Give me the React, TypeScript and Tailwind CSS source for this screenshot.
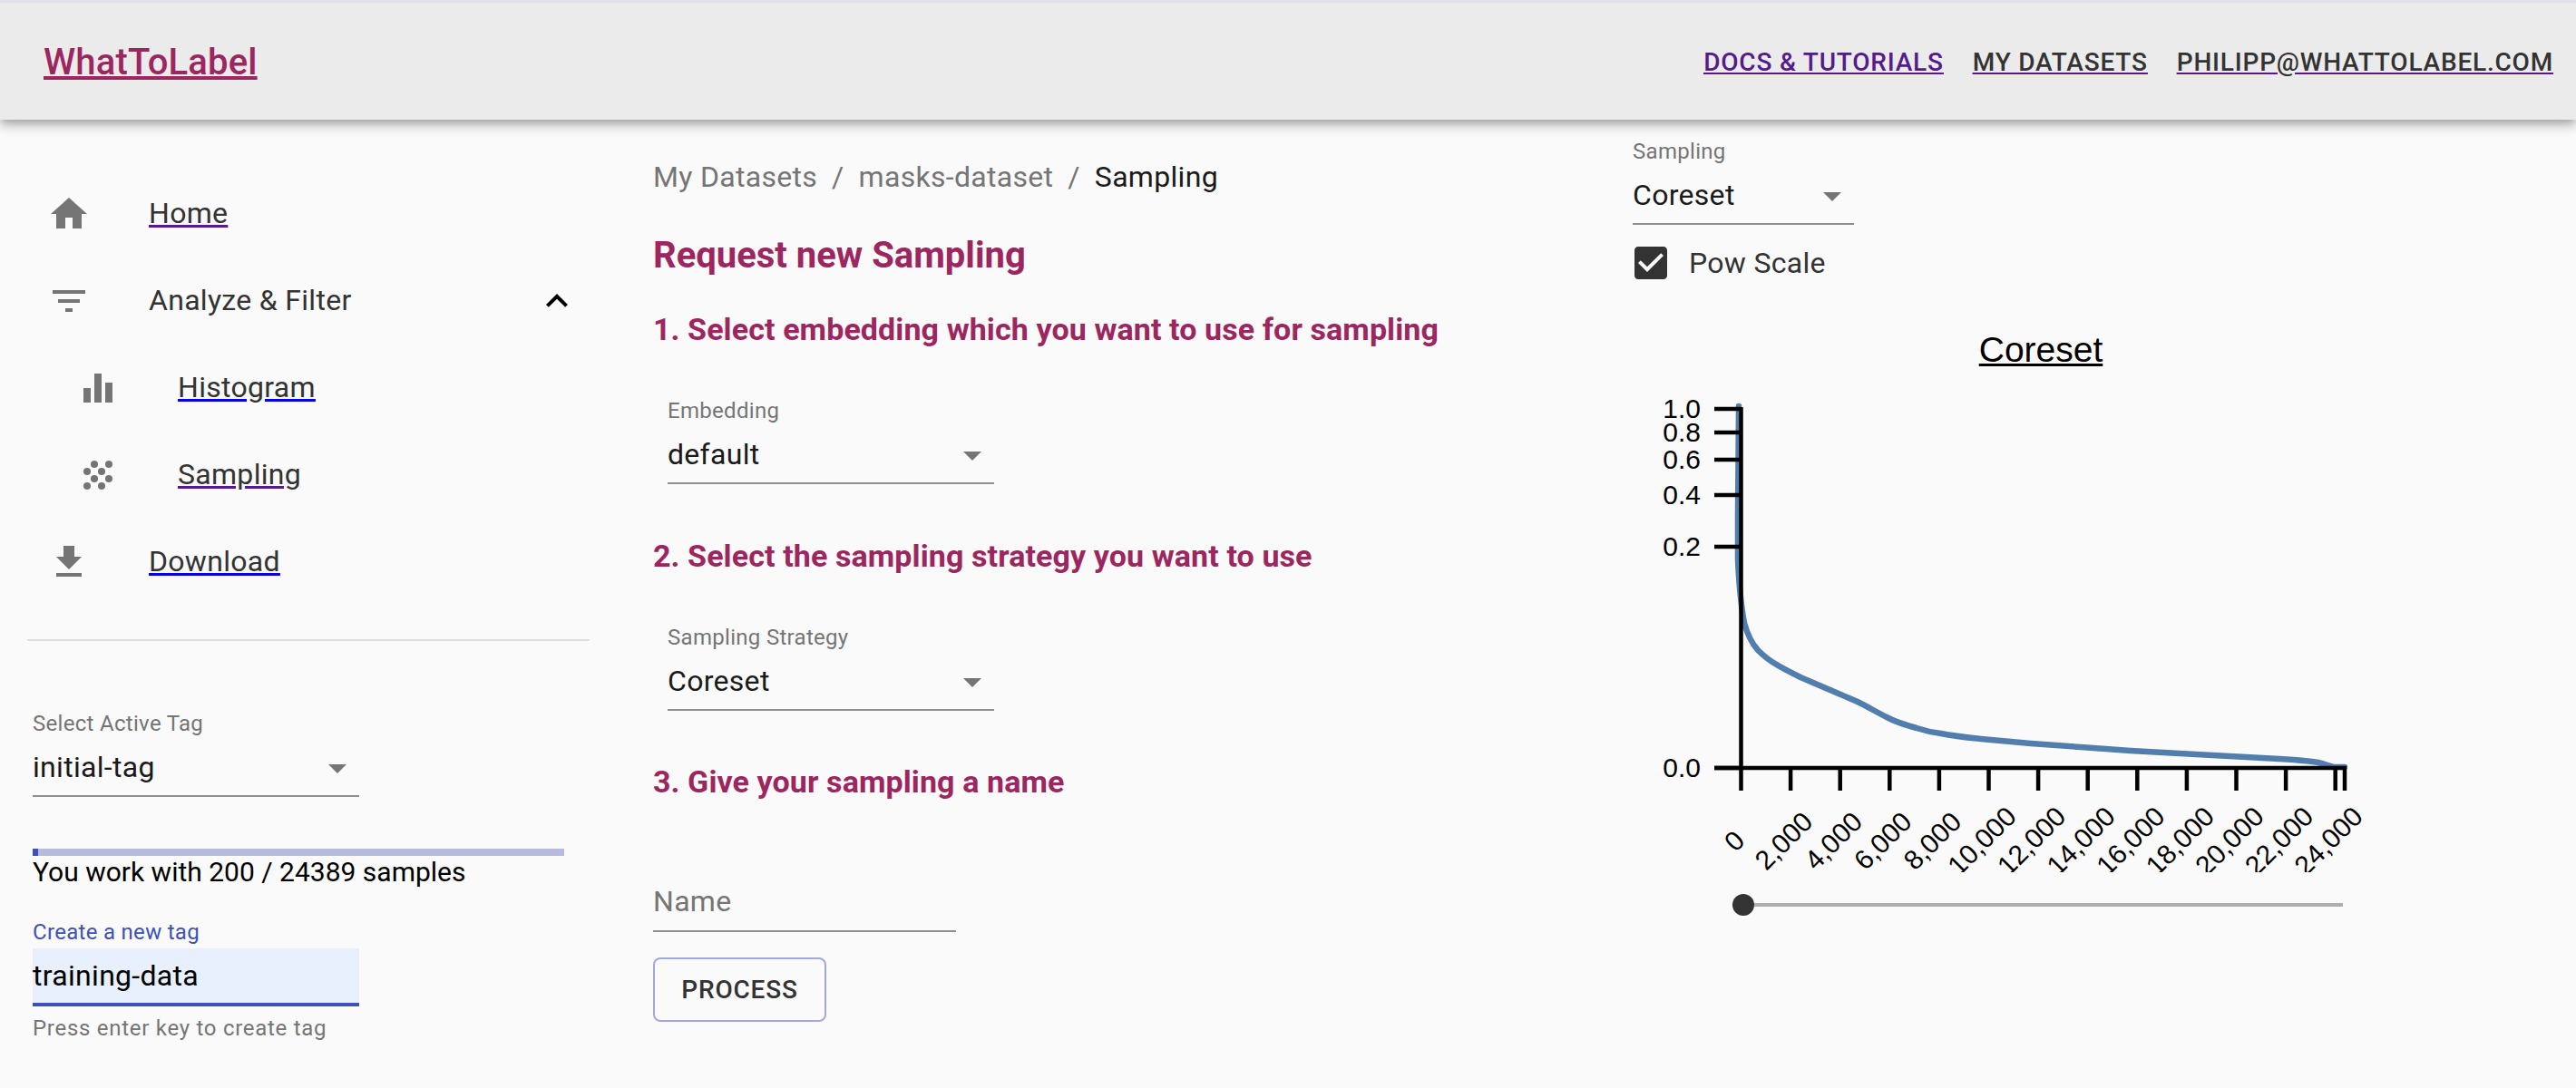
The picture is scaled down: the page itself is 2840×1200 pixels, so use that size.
import React from 'react';

const yTicks = [
  { label: '1.0', y: 451 },
  { label: '0.8', y: 477 },
  { label: '0.6', y: 507 },
  { label: '0.4', y: 546 },
  { label: '0.2', y: 603 },
  { label: '0.0', y: 847 },
];

const xLabels = ['0', '2,000', '4,000', '6,000', '8,000', '10,000', '12,000', '14,000', '16,000', '18,000', '20,000', '22,000', '24,000'];

const curve =
  'M1917 448 L1916 567 L1916 617 C1917 640 1918 660 1923 687 C1926 698 1930 708 1938 717 C1945 724 1950 728 1957 732 C1965 737 1973 741 1985 747 L2027 765 C2036 769 2044 772 2050 775 C2060 780 2070 786 2082 792 C2092 797 2102 800 2113 803 C2122 806 2132 808 2140 809 C2155 812 2165 813 2184 815 L2239 820 L2294 824 L2349 828 L2403 831 L2458 834 L2513 837 C2530 838 2545 839 2556 841 C2564 843 2568 845 2573 846 L2585 846';

function Icon({ d, className = 'text-[#757575]' }: { d: string; className?: string }) {
  return (
    <svg viewBox="0 0 24 24" className={`w-12 h-12 shrink-0 ${className}`} fill="currentColor">
      <path d={d} />
    </svg>
  );
}

function Select({ label, value, width = 'w-[360px]' }: { label: string; value: string; width?: string }) {
  return (
    <div className={width}>
      <div className="text-[24px] leading-[28px] tracking-[0.3px] text-[#757575]">{label}</div>
      <div className="relative mt-[11px] pb-[8px] border-b-2 border-[#8e8e8e] text-[32px] leading-[46px] tracking-[0.3px] text-[#1a1a1a]">
        {value}
        <svg viewBox="0 0 24 24" className="absolute right-0 top-0 w-12 h-12 text-[#757575]" fill="currentColor">
          <path d="M7 10l5 5 5-5z" />
        </svg>
      </div>
    </div>
  );
}

function SectionTitle({ children, className }: { children: React.ReactNode; className: string }) {
  return <h2 className={`text-[34px] leading-[44px] tracking-[0.1px] font-bold text-[#9c2760] ${className}`}>{children}</h2>;
}

function Sidebar() {
  return (
    <aside className="w-[720px] shrink-0 pt-[56px]">
      <nav className="tracking-[0.3px]">
        <div className="h-[96px] pl-[52px] flex items-center text-[32px] text-[#333]">
          <Icon d="M10 20v-6h4v6h5v-8h3L12 3 2 12h3v8z" />
          <a className="ml-[64px] mb-[3px] underline decoration-[#551a8b]">Home</a>
        </div>
        <div className="h-[96px] w-[638px] pl-[52px] flex items-center text-[32px] text-[#333]">
          <Icon d="M10 18h4v-2h-4v2zM3 6v2h18V6H3zm3 7h12v-2H6v2z" />
          <span className="ml-[64px] mb-[3px] flex-1">Analyze &amp; Filter</span>
          <Icon d="M12 8l-6 6 1.41 1.41L12 10.83l4.59 4.58L18 14z" className="text-black" />
        </div>
        <div className="h-[96px] pl-[84px] flex items-center text-[32px] text-[#333]">
          <svg viewBox="0 0 48 48" className="w-12 h-12 shrink-0 text-[#757575]" fill="currentColor">
            <rect x="8" y="24" width="8" height="16" />
            <rect x="20" y="8" width="8" height="32" />
            <rect x="32" y="18" width="8" height="22" />
          </svg>
          <a className="ml-[64px] mb-[3px] underline decoration-[#0000ee]">Histogram</a>
        </div>
        <div className="h-[96px] pl-[84px] flex items-center text-[32px] text-[#333]">
          <svg viewBox="0 0 48 48" className="w-12 h-12 shrink-0 text-[#757575]" fill="currentColor">
            <circle cx="20" cy="12" r="4" />
            <circle cx="36" cy="12" r="4" />
            <circle cx="12" cy="20" r="4" />
            <circle cx="28" cy="20" r="4" />
            <circle cx="20" cy="28" r="4" />
            <circle cx="36" cy="28" r="4" />
            <circle cx="12" cy="36" r="4" />
            <circle cx="28" cy="36" r="4" />
          </svg>
          <a className="ml-[64px] mb-[3px] underline decoration-[#551a8b]">Sampling</a>
        </div>
        <div className="h-[96px] pl-[52px] flex items-center text-[32px] text-[#333]">
          <Icon d="M19 9h-4V3H9v6H5l7 7 7-7zM5 18v2h14v-2H5z" />
          <a className="ml-[64px] mb-[3px] underline decoration-[#0000ee]">Download</a>
        </div>
      </nav>

      <div className="mt-[37px] ml-[30px] w-[620px] h-[2px] bg-[#e0e0e0]" />

      {/* Tag controls */}
      <div className="pl-[36px] mt-[77px]">
        <Select label="Select Active Tag" value="initial-tag" />

        <div className="mt-[57px] w-[586px] h-2 bg-[#b6bbdd]">
          <div className="w-[6px] h-2 bg-[#3f51b5]" />
        </div>
        <p className="mt-[2px] text-[30px] leading-[32px] text-black">You work with 200 / 24389 samples</p>

        <div className="mt-[36px] text-[24px] leading-[28px] tracking-[0.3px] text-[#3f51b5]">Create a new tag</div>
        <div className="mt-1 w-[360px] h-[64px] flex items-center bg-[#e8f0fe] border-b-4 border-[#3f51b5] text-[32px] tracking-[0.3px] text-black">
          training-data
        </div>
        <p className="mt-[10px] text-[24px] leading-[28px] tracking-[0.72px] text-[#757575]">Press enter key to create tag</p>
      </div>
    </aside>
  );
}

function SamplingForm() {
  return (
    <main className="w-[1080px] shrink-0 pt-[40px]">
      <div className="flex text-[32px] leading-[46px] tracking-[0.3px] text-[#757575]">
        <span>My Datasets</span>
        <span className="mx-4">/</span>
        <span>masks-dataset</span>
        <span className="mx-4">/</span>
        <span className="text-[#1a1a1a]">Sampling</span>
      </div>

      <h1 className="mt-[40px] text-[40px] leading-[48px] font-bold text-[#9c2760]">Request new Sampling</h1>

      <SectionTitle className="mt-[35px]">1. Select embedding which you want to use for sampling</SectionTitle>
      <div className="ml-4 mt-[54px]">
        <Select label="Embedding" value="default" />
      </div>

      <SectionTitle className="mt-[57px]">2. Select the sampling strategy you want to use</SectionTitle>
      <div className="ml-4 mt-[54px]">
        <Select label="Sampling Strategy" value="Coreset" />
      </div>

      <SectionTitle className="mt-[56px]">3. Give your sampling a name</SectionTitle>

      <div className="mt-[87px] w-[334px] pb-[9px] border-b-2 border-[#8e8e8e] text-[32px] leading-[46px] tracking-[0.3px] text-[#757575]">Name</div>

      <button className="mt-[28px] w-[191px] h-[71px] rounded-lg border-2 border-[#a0a8dc] text-[28px] font-medium tracking-[0.8px] text-[#333]">
        PROCESS
      </button>
    </main>
  );
}

function Chart() {
  return (
    <svg viewBox="1820 440 800 522" className="ml-[20px] mt-[30px] w-[800px] h-[522px] block font-['Liberation_Sans',Arial,sans-serif]">
      <path d={curve} fill="none" stroke="#527eae" strokeWidth="6.5" strokeLinecap="round" strokeLinejoin="round" />
      <g stroke="#000" strokeWidth="4.5">
        <line x1="1919.5" y1="449" x2="1919.5" y2="847" />
        <line x1="1890" y1="847" x2="2587" y2="847" />
        {yTicks.map(t => (
          <line key={t.label} x1="1890" y1={t.y} x2="1919" y2={t.y} />
        ))}
        {xLabels.map((_, i) => (
          <line key={i} x1={1919.5 + i * 54.6} y1="847" x2={1919.5 + i * 54.6} y2="872" />
        ))}
        <line x1="2585" y1="847" x2="2585" y2="872" />
      </g>
      <g fontSize="30" fill="#000">
        {yTicks.map(t => (
          <text key={t.label} x="1875" y={t.y + 10} textAnchor="end">
            {t.label}
          </text>
        ))}
        {xLabels.map((l, i) => {
          const cx = 1911.5 + i * 54.6;
          return (
            <text key={l} x={cx} y="938" textAnchor="middle" transform={`rotate(-45 ${cx} 927)`}>
              {l}
            </text>
          );
        })}
      </g>
    </svg>
  );
}

function ChartPanel() {
  return (
    <section className="w-[900px] shrink-0 pt-[21px]">
      <Select label="Sampling" value="Coreset" width="w-[244px]" />
      <div className="mt-[18px] -ml-1 h-12 flex items-center text-[32px] tracking-[0.3px] text-[#333]">
        <Icon
          d="M19 3H5c-1.11 0-2 .9-2 2v14c0 1.1.89 2 2 2h14c1.11 0 2-.9 2-2V5c0-1.1-.89-2-2-2zm-9 14l-5-5 1.41-1.41L10 14.17l7.59-7.59L19 8l-9 9z"
          className="text-[#333]"
        />
        <span className="ml-[18px]">Pow Scale</span>
      </div>
      <div className="mt-[48px] text-center text-[39px] leading-[48px] underline text-black font-['Liberation_Sans',Arial,sans-serif]">Coreset</div>
      <Chart />
      <div className="mt-[24px] ml-[110px] w-[673px] flex items-center">
        <div className="w-6 h-6 rounded-full bg-[#333]" />
        <div className="flex-1 h-1 bg-[#aeaeae]" />
      </div>
    </section>
  );
}

export default function App() {
  return (
    <div className="w-[2840px] h-[1200px] overflow-hidden bg-[#fafafa] font-[Roboto,sans-serif]">
      <header className="relative z-10 h-[132px] pt-[3px] border-t-[3px] border-[#e0e0ea] bg-[#ebebeb] flex items-center justify-between pl-[48px] pr-[25px] shadow-[0_4px_8px_-2px_rgba(0,0,0,0.2),0_8px_10px_0_rgba(0,0,0,0.14),0_2px_20px_0_rgba(0,0,0,0.12)]">
        <a className="text-[40px] font-medium tracking-[0.15px] text-[#9c2760] underline">WhatToLabel</a>
        <div className="flex gap-8 text-[28px] font-medium tracking-[0.8px] uppercase underline decoration-[#551a8b]">
          <a className="text-[#551a8b]">Docs &amp; Tutorials</a>
          <a className="text-[#333]">My Datasets</a>
          <a className="text-[#333]">philipp@whattolabel.com</a>
        </div>
      </header>
      <div className="flex">
        <Sidebar />
        <SamplingForm />
        <ChartPanel />
      </div>
    </div>
  );
}
